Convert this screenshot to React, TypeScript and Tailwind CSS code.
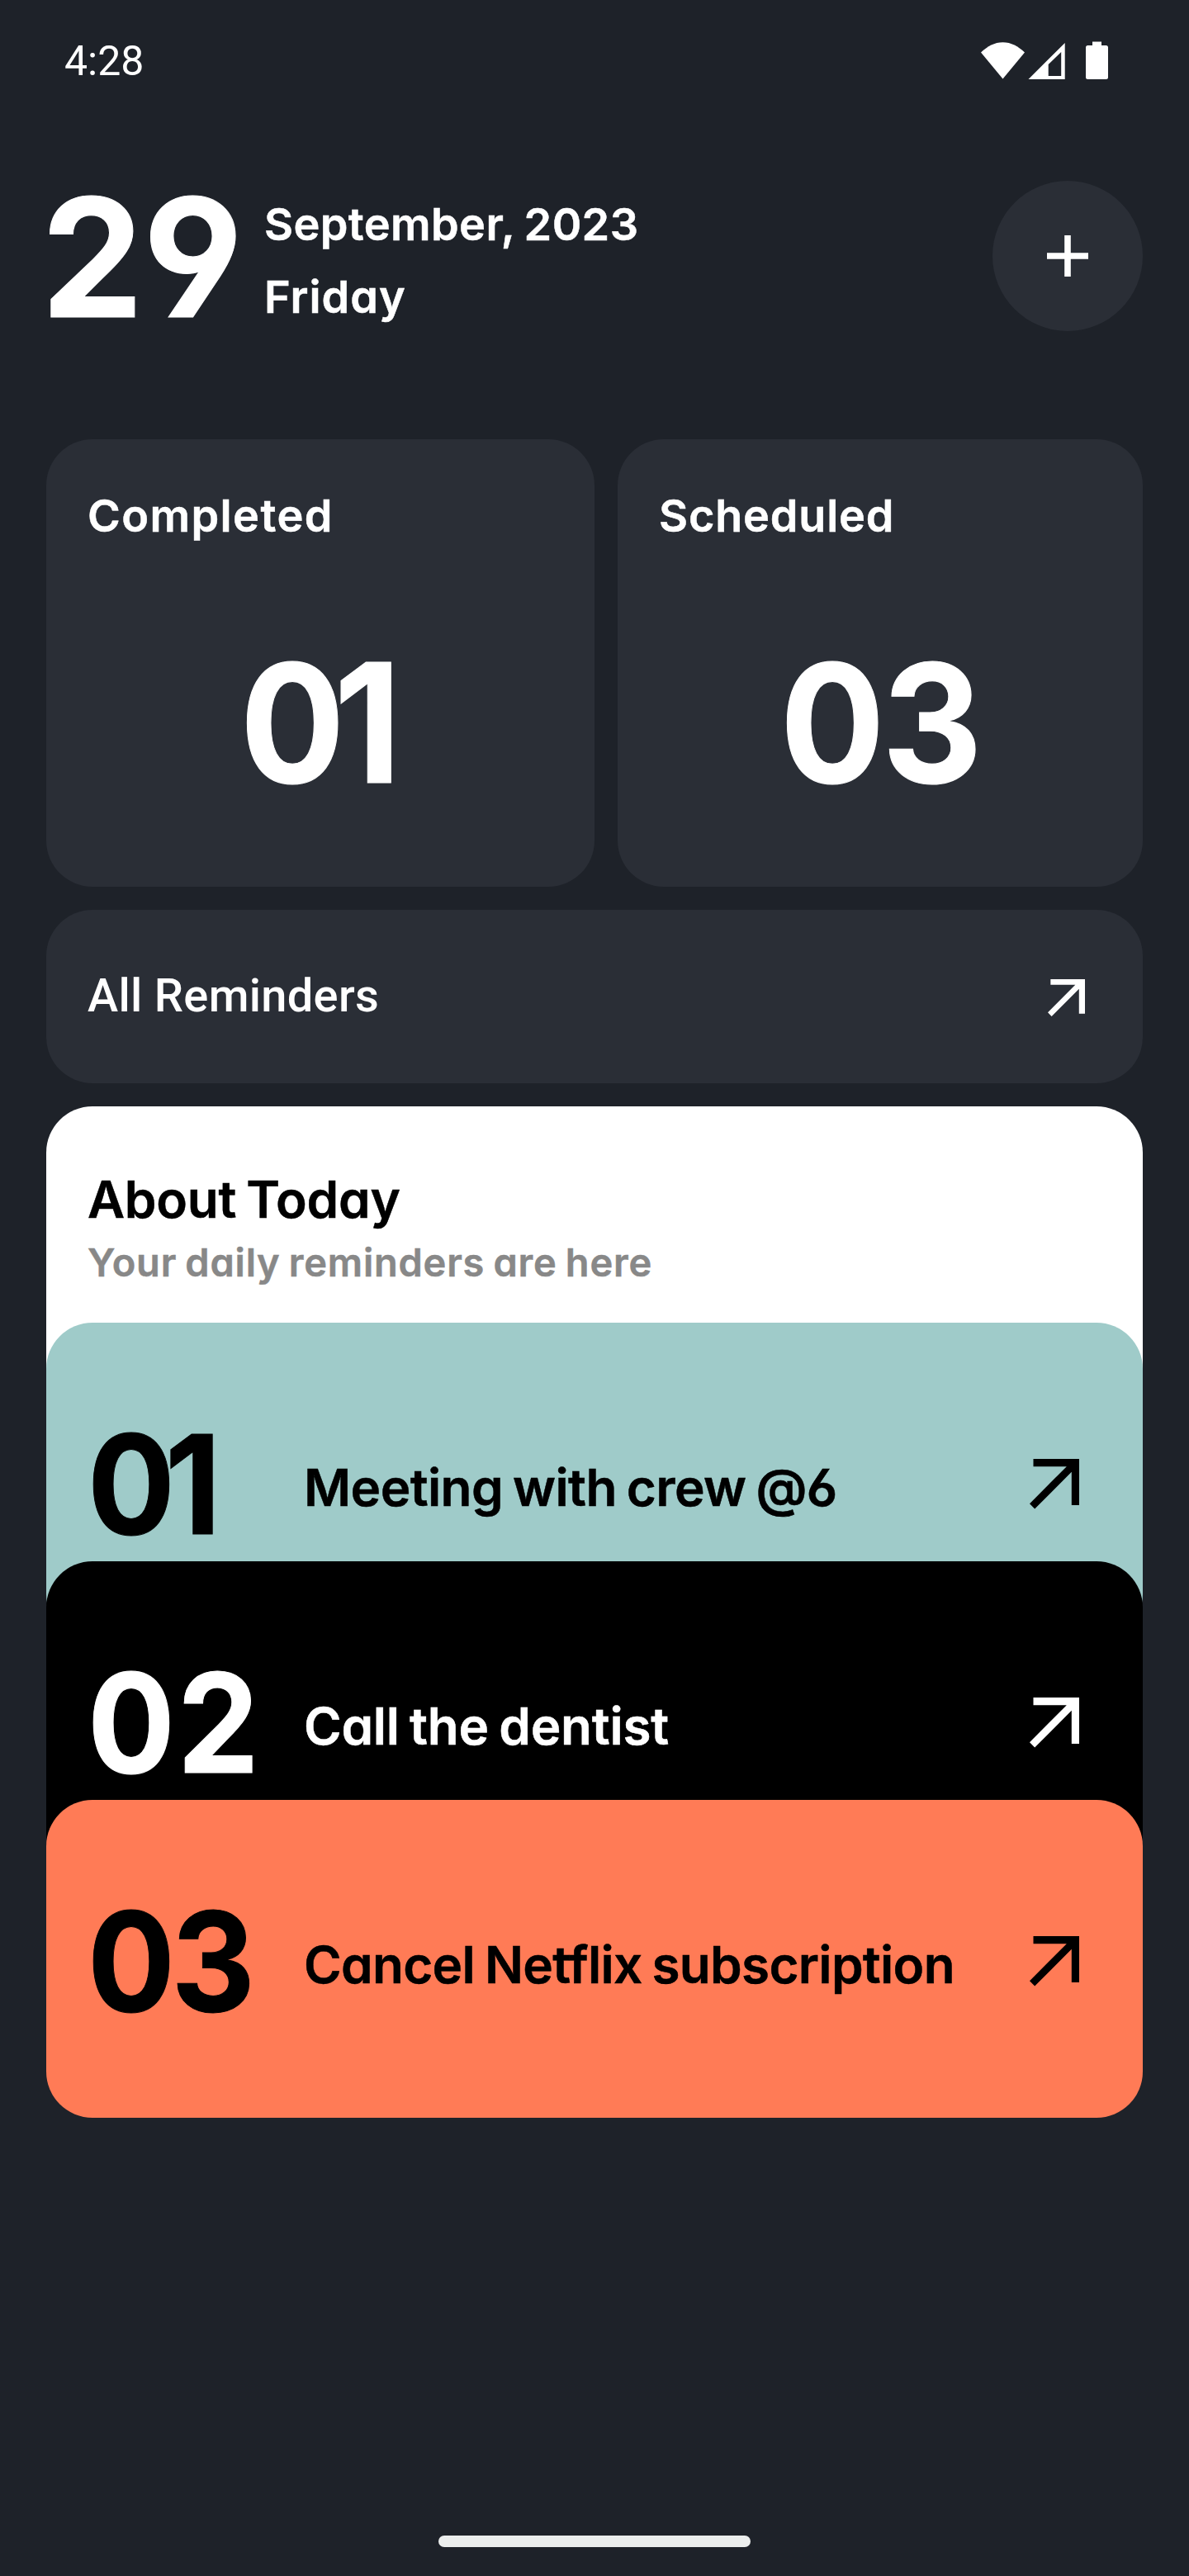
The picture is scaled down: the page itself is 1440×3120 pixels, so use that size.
const heading = "font-['Inter',sans-serif] font-semibold whitespace-nowrap [font-feature-settings:'cv11','cv03','cv04'] [word-spacing:-0.05em] [-webkit-text-stroke:0.5px_currentColor]";
const numeral = "font-['Inter',sans-serif] font-bold whitespace-nowrap [font-feature-settings:'cv03','cv04'] [-webkit-text-stroke:1px_currentColor]";

function DiagonalArrow({ className }: { className: string }) {
  return (
    <svg viewBox="0 0 60.5 60.5" fill="currentColor" className={className}>
      <path d="M4.5 0H60.5V56H50.8V15.8L6.2 60.5 0 54.2 44.8 9.2H4.5Z" />
    </svg>
  );
}

function StatusBar() {
  return (
    <div className="flex h-[148px] items-center justify-between pl-[78px] pr-[96px]">
      <span className="font-['Roboto',sans-serif] text-[50px] leading-[60px] text-white">4:28</span>
      <svg viewBox="0 0 156 48" fill="white" className="mt-[-2px] h-[48px] w-[156px]">
        <path d="M0 14.5C8 7 16.500 2.300 26.500 2.300S45 7 53 14.500L26.500 46.500Z" />
        <path fillRule="evenodd" d="M57.500 47 101.700 3V47ZM81.700 29V43H97.200V14Z" />
        <path d="M135 1.500H146V6H151.500Q154 6 154 8.500V44.500Q154 47 151.500 47H129.500Q127 47 127 44.500V8.500Q127 6 129.500 6H135Z" />
      </svg>
    </div>
  );
}

type StatCardProps = { title: string; count: string; className: string; titleClass: string; countClass: string };

function StatCard({ title, count, className, titleClass, countClass }: StatCardProps) {
  return (
    <div className={`flex h-[542px] flex-col rounded-[56px] bg-[#2a2e36] pt-[61px] ${className}`}>
      <div className={`${heading} pl-[50px] text-[54px] leading-[64px] ${titleClass}`}>{title}</div>
      <div className={`${numeral} mt-[118px] origin-center scale-x-[0.94] self-center text-[200px] leading-[200px] ${countClass}`}>{count}</div>
    </div>
  );
}

const reminders = [
  { no: "01", label: "Meeting with crew @6", card: "mt-[-123px] bg-[#9fcbc9] text-black", noClass: "tracking-[-13px]", labelClass: "tracking-[-0.6px]" },
  { no: "02", label: "Call the dentist", card: "mt-[-96px] bg-black text-white", noClass: "tracking-[3.2px]", labelClass: "tracking-[-0.25px]" },
  { no: "03", label: "Cancel Netflix subscription", card: "mt-[-96px] bg-[#ff7b56] text-black", noClass: "tracking-[-4.5px]", labelClass: "tracking-[-0.7px]" },
];

export default function App() {
  return (
    <div className="flex h-[3120px] w-[1440px] flex-col bg-[#1e2229] text-white">
      <StatusBar />
      <header className="mt-[71px] flex h-[182px] items-center pl-[50px] pr-[56px]">
        <div className="w-[270px]">
          <div className={`${numeral} mt-[2px] inline-block origin-left scale-x-[0.98] text-[200px] leading-[200px]`}>29</div>
        </div>
        <div className={`${heading} mt-[12px] text-[54px] leading-[88px]`}>
          <div className="tracking-[0.37px]">September, 2023</div>
          <div className="tracking-[1px]">Friday</div>
        </div>
        <button className="ml-auto flex size-[182px] items-center justify-center rounded-full bg-[#2a2e36]">
          <svg viewBox="0 0 50 50" className="size-[50px]" fill="white">
            <path d="M21.200 0H28.800V21.200H50V28.800H28.800V50H21.200V28.800H0V21.200H21.200Z" />
          </svg>
        </button>
      </header>
      <main className="mt-[131px] flex flex-col px-[56px]">
        <div className="flex gap-[28px]">
          <StatCard title="Completed" count="01" className="w-[664px]" titleClass="tracking-[1.4px]" countClass="mr-[13px] tracking-[-14px]" />
          <StatCard title="Scheduled" count="03" className="w-[636px]" titleClass="tracking-[0.8px]" countClass="tracking-[-3.4px]" />
        </div>
        <div className="mt-[28px] flex h-[210px] items-center justify-between rounded-[56px] bg-[#2a2e36] pl-[50px] pr-[70px]">
          <span className="mt-[-2px] font-['Roboto',sans-serif] text-[56px] font-medium leading-[64px] tracking-[0.3px]">All Reminders</span>
          <DiagonalArrow className="mt-[3px] size-[45px]" />
        </div>
        <section className="mt-[28px]">
          <div className="h-[385px] rounded-[56px] bg-white pl-[50px] pt-[76px]">
            <div className={`${heading} text-[62px] leading-[74px] tracking-[-0.27px] text-black`}>About Today</div>
            <div className={`${heading} mt-[11px] text-[47px] leading-[56px] tracking-[0.78px] text-[#888888]`}>Your daily reminders are here</div>
          </div>
          {reminders.map((item) => (
            <div key={item.no} className={`relative flex h-[385px] items-center rounded-[56px] pl-[50px] pr-[77px] ${item.card}`}>
              <div className="w-[262px]">
                <div className={`${numeral} mt-[4px] inline-block origin-left scale-x-[0.94] text-[167px] leading-[200px] ${item.noClass}`}>{item.no}</div>
              </div>
              <div className={`${heading} mt-[14px] text-[62px] leading-[76px] ${item.labelClass}`}>{item.label}</div>
              <DiagonalArrow className="ml-auto mt-[6px] size-[60.5px] shrink-0" />
            </div>
          ))}
        </section>
      </main>
      <div className="mb-[35px] mt-auto h-[14px] w-[378px] self-center rounded-full bg-[#eceeed]" />
    </div>
  );
}
